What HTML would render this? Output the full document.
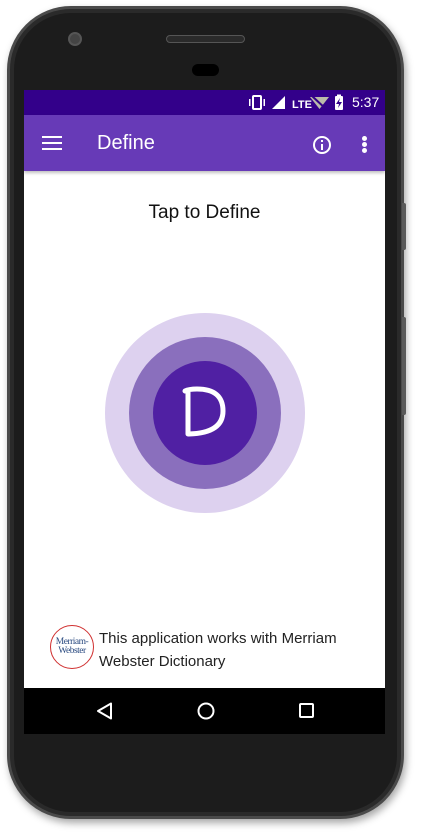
<!DOCTYPE html>
<html><head><meta charset="utf-8"><style>
*{margin:0;padding:0;box-sizing:border-box}
body{width:423px;height:835px;background:#fff;position:relative;overflow:hidden;font-family:"Liberation Sans",Roboto,sans-serif}
.body{position:absolute;left:7px;top:6px;width:397px;height:813px;border-radius:64px;background:#1c1c1c;border:3px solid #4a4a4a;box-shadow:2px 4px 8px rgba(0,0,0,.35), inset 0 0 0 4px #2a2a2a}
.btn{position:absolute;left:402px;width:4px;background:#5a5a5a;border-radius:0 2px 2px 0}
.screen{position:absolute;left:24px;top:90px;width:361px;height:644px;background:#fff;overflow:hidden}
.status{height:25px;background:#33008a;color:#fff;position:relative}
.app{height:56px;background:#673ab7;color:#fff;position:relative;box-shadow:0 2px 3px rgba(0,0,0,.25)}
.nav{position:absolute;left:0;top:598px;width:361px;height:46px;background:#000}
</style></head><body>
<div class="body"></div>
<div class="btn" style="top:203px;height:47px"></div>
<div class="btn" style="top:317px;height:98px"></div>
<div style="position:absolute;left:68px;top:32px;width:14px;height:14px;border-radius:50%;background:#444;border:2px solid #555"></div>
<div style="position:absolute;left:166px;top:35px;width:79px;height:8px;border-radius:4px;background:#2a2a2a;border:1px solid #555"></div>
<div style="position:absolute;left:192px;top:64px;width:27px;height:12px;border-radius:6px;background:#000"></div>
<div class="screen">
 <div class="status">
  <svg width="361" height="25" style="position:absolute;left:0;top:0">
   <rect x="229" y="6" width="8" height="13" rx="1" fill="none" stroke="#fff" stroke-width="2"/>
   <rect x="225" y="9" width="1.5" height="7" fill="#fff"/><rect x="239.5" y="9" width="1.5" height="7" fill="#fff"/>
   <polygon points="248,19 261,6 261,19" fill="#fff"/>
   <text x="268" y="18" font-size="11" font-weight="bold" fill="#fff" font-family="Liberation Sans Narrow,Liberation Sans,sans-serif">LTE</text>
   <polygon points="286,7 305,7 295.5,19" fill="#bba"/>
   <line x1="288" y1="6" x2="303" y2="20" stroke="#33008a" stroke-width="2"/>
   <rect x="311" y="6" width="8" height="14" rx="1" fill="#fff"/><rect x="313" y="4.5" width="4" height="2" fill="#fff"/>
   <polygon points="316,8 312,14 315,14 314,18 318,12 315,12" fill="#33008a"/>
  </svg>
  <span style="position:absolute;left:328px;top:4px;font-size:14px">5:37</span>
 </div>
 <div class="app">
  <div style="position:absolute;left:18px;top:21px;width:20px;height:2px;background:#fff;box-shadow:0 6px 0 #fff,0 12px 0 #fff"></div>
  <span style="position:absolute;left:73px;top:17px;font-size:20px">Define</span>
  <svg width="20" height="20" style="position:absolute;left:288px;top:20px"><circle cx="10" cy="10" r="8" fill="none" stroke="#fff" stroke-width="2"/><rect x="9" y="9" width="2" height="6" fill="#fff"/><rect x="9" y="5" width="2" height="2" fill="#fff"/></svg>
  <div style="position:absolute;left:338px;top:21px;width:5px;height:5px;border-radius:50%;background:#fff;box-shadow:0 6px 0 #fff,0 12px 0 #fff"></div>
 </div>
 <div style="position:absolute;left:0;width:361px;top:112px;text-align:center;font-size:19px;color:#111">Tap to Define</div>
 <div style="position:absolute;left:81px;top:223px;width:200px;height:200px;border-radius:50%;background:#ddd1ef"></div>
 <div style="position:absolute;left:105px;top:247px;width:152px;height:152px;border-radius:50%;background:#8a6fbd"></div>
 <div style="position:absolute;left:129px;top:271px;width:104px;height:104px;border-radius:50%;background:#5020a3"></div>
 <svg width="104" height="104" style="position:absolute;left:129px;top:271px"><path d="M32 30 Q36 28 44 28 Q70 28 70 50 Q70 72 36 73 M35 30 L35 73" fill="none" stroke="#fff" stroke-width="5" stroke-linecap="round" stroke-linejoin="round"/></svg>
 <div style="position:absolute;left:26px;top:535px;width:44px;height:44px;border-radius:50%;border:1.5px solid #d03030;background:#fff;color:#2a4a80;font-family:'Liberation Serif',serif;font-size:9.5px;line-height:9px;text-align:center;padding-top:12px;letter-spacing:-0.5px">Merriam-<br>Webster</div>
 <div style="position:absolute;left:75px;top:537px;font-size:15px;line-height:23px;color:#222">This application works with Merriam<br>Webster Dictionary</div>
 <div class="nav">
  <svg width="361" height="46"><polygon points="74,23 87,15.5 87,30.5" fill="none" stroke="#fff" stroke-width="2" stroke-linejoin="round"/><circle cx="182" cy="23" r="7.5" fill="none" stroke="#fff" stroke-width="2"/><rect x="276" y="16" width="13" height="13" rx="1" fill="none" stroke="#fff" stroke-width="2"/></svg>
 </div>
</div>
</body></html>
